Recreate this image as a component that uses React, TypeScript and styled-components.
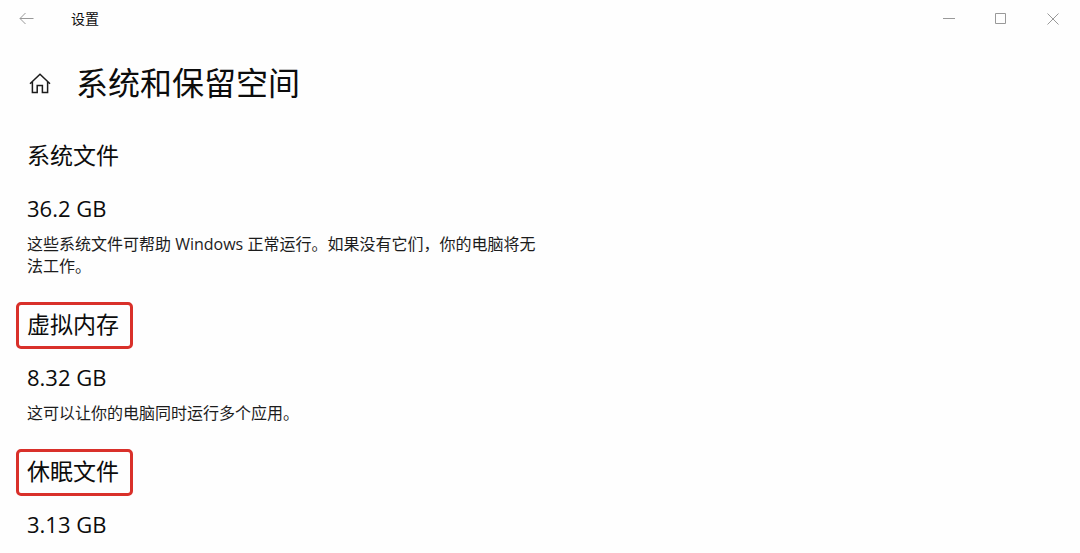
import React from "react";
import styled, { createGlobalStyle } from "styled-components";

const GlobalStyle = createGlobalStyle`
  * { box-sizing: border-box; }
  body {
    margin: 0;
    background: #fefefe;
    color: #0c0c0c;
    font-family: "Open Sans", "Noto Sans CJK SC", sans-serif;
  }
`;

const Window = styled.div`
  min-height: 100vh;
  display: flex;
  flex-direction: column;
`;

const TitleBar = styled.header`
  display: flex;
  align-items: center;
  height: 37px;
  padding-right: 1px;
`;

const BarButton = styled.button`
  display: flex;
  align-items: center;
  justify-content: center;
  width: 52px;
  height: 36px;
  padding: 0;
  border: 0;
  background: transparent;
  color: #999;
`;

const AppName = styled.span`
  flex: 1;
  padding-left: 19px;
  font-size: 14px;
  line-height: 21px;
`;

const PageHeader = styled.div`
  display: flex;
  align-items: center;
  gap: 24px;
  height: 60px;
  margin: 16px 0 20px;
  padding-left: 28px;
`;

const HomeLink = styled.a`
  display: flex;
  width: 24px;
  height: 24px;
  color: #1c1c1c;
`;

const PageTitle = styled.h1`
  margin: 0;
  font-size: 32px;
  font-weight: 400;
  line-height: 44px;
`;

const Content = styled.main`
  display: flex;
  flex-direction: column;
  gap: 25px;
  max-width: 540px;
  padding-left: 16px;
`;

const Section = styled.section`
  display: flex;
  flex-direction: column;
  align-items: flex-start;
`;

const SectionTitle = styled.h2<{ $marked?: boolean }>`
  margin: 0 0 13px;
  padding: 0 11px 3px 8px;
  border: 3px solid ${(p) => (p.$marked ? "#d9302a" : "transparent")};
  border-radius: 5px;
  font-size: 23px;
  font-weight: 400;
  line-height: 38px;
`;

const Size = styled.p`
  margin: 0 0 10px;
  padding-left: 11px;
  font-size: 22px;
  line-height: 30px;
`;

const Description = styled.p`
  margin: 0;
  padding-left: 11px;
  color: #1c1c1c;
  font-size: 16px;
  line-height: 22px;
`;

interface StorageItem {
  title: string;
  size: string;
  description?: string;
  marked?: boolean;
}

const items: StorageItem[] = [
  {
    title: "系统文件",
    size: "36.2 GB",
    description:
      "这些系统文件可帮助 Windows 正常运行。如果没有它们，你的电脑将无法工作。",
  },
  {
    title: "虚拟内存",
    size: "8.32 GB",
    description: "这可以让你的电脑同时运行多个应用。",
    marked: true,
  },
  { title: "休眠文件", size: "3.13 GB", marked: true },
];

export default function App() {
  return (
    <Window>
      <GlobalStyle />
      <TitleBar>
        <BarButton type="button" aria-label="返回">
          <svg width="16" height="14" viewBox="0 0 16 14" fill="none" stroke="currentColor">
            <path d="M15.5 6.5H2M7.5 1L2 6.5 7.5 12" />
          </svg>
        </BarButton>
        <AppName>设置</AppName>
        <BarButton type="button" aria-label="最小化">
          <svg width="12" height="12" viewBox="0 0 12 12" stroke="currentColor">
            <path d="M0 5.5h12" />
          </svg>
        </BarButton>
        <BarButton type="button" aria-label="最大化">
          <svg width="12" height="12" viewBox="0 0 12 12" fill="none" stroke="currentColor">
            <path d="M.5.5h10v10H.5z" />
          </svg>
        </BarButton>
        <BarButton type="button" aria-label="关闭">
          <svg width="12" height="12" viewBox="0 0 12 12" stroke="currentColor">
            <path d="M.5.5l11 11M11.5.5l-11 11" />
          </svg>
        </BarButton>
      </TitleBar>
      <PageHeader>
        <HomeLink href="#" aria-label="主页">
          <svg width="24" height="24" viewBox="0 0 24 24" fill="none" stroke="currentColor" strokeWidth="1.5">
            <path d="M2 12.8L12 3.2l10 9.6M4.4 10.8v10.7h4.8v-7h5.2v7h5.2V10.8" />
          </svg>
        </HomeLink>
        <PageTitle>系统和保留空间</PageTitle>
      </PageHeader>
      <Content>
        {items.map((item) => (
          <Section key={item.title}>
            <SectionTitle $marked={item.marked}>{item.title}</SectionTitle>
            <Size>{item.size}</Size>
            {item.description && <Description>{item.description}</Description>}
          </Section>
        ))}
      </Content>
    </Window>
  );
}
